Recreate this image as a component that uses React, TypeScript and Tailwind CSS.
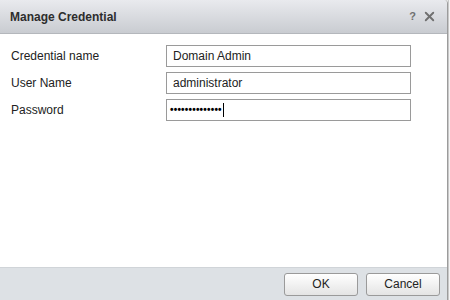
import { X } from 'lucide-react'

const fields = [
  { label: 'Credential name', value: 'Domain Admin' },
  { label: 'User Name', value: 'administrator' },
  { label: 'Password', value: '', secret: true },
]

export default function App() {
  return (
    <div className="w-[450px] h-[300px] flex bg-[#e8e8e8] font-['Liberation_Sans',Arial,sans-serif] text-[12px] text-[#222]">
      <div className="w-[448px] h-full flex flex-col border-r border-[#9c9c9c] rounded-tr-[4px] overflow-hidden">
        {/* Title bar */}
        <div className="h-[34px] shrink-0 flex items-center justify-between pl-[10px] pr-[10px] bg-gradient-to-b from-[#e9eaee] to-[#c9ccd1] border-b border-[#b4b7bc]">
          <span className="font-bold text-[12px] text-[#2d2d2d]">Manage Credential</span>
          <div className="flex items-center gap-[6px] text-[#707070]">
            <span className="font-bold text-[11px]">?</span>
            <X className="w-[15px] h-[15px]" strokeWidth={3} />
          </div>
        </div>

        {/* Body */}
        <div className="flex-1 bg-white pt-[11px] flex flex-col gap-[5px]">
          {fields.map((f) => (
            <div key={f.label} className="flex items-center h-[22px]">
              <div className="w-[166px] pl-[11px]">{f.label}</div>
              <div className="w-[245px] h-[22px] border border-[#9a9a9a] flex items-center px-[3px]">
                {f.secret ? (
                  <>
                    <span className="text-[10px] font-bold tracking-[0.2px] leading-none text-black">••••••••••••••</span>
                    <span className="w-px h-[14px] bg-black ml-px" />
                  </>
                ) : (
                  <span className="pl-[3px]">{f.value}</span>
                )}
              </div>
            </div>
          ))}
        </div>

        {/* Footer */}
        <div className="h-[33px] shrink-0 bg-[#dde1e5] border-t border-[#d0d4d8] flex items-center justify-end gap-[8px] pr-[7px]">
          <button className="w-[74px] h-[23px] rounded-[3px] border border-[#9a9a9a] bg-gradient-to-b from-white to-[#e4e4e4] text-[12px] text-[#222]">
            OK
          </button>
          <button className="w-[74px] h-[23px] rounded-[3px] border border-[#9a9a9a] bg-gradient-to-b from-white to-[#e4e4e4] text-[12px] text-[#222]">
            Cancel
          </button>
        </div>
      </div>
      <div className="flex-1 border-l border-[#c8c8c8] bg-[#f4f4f4]" />
    </div>
  )
}
